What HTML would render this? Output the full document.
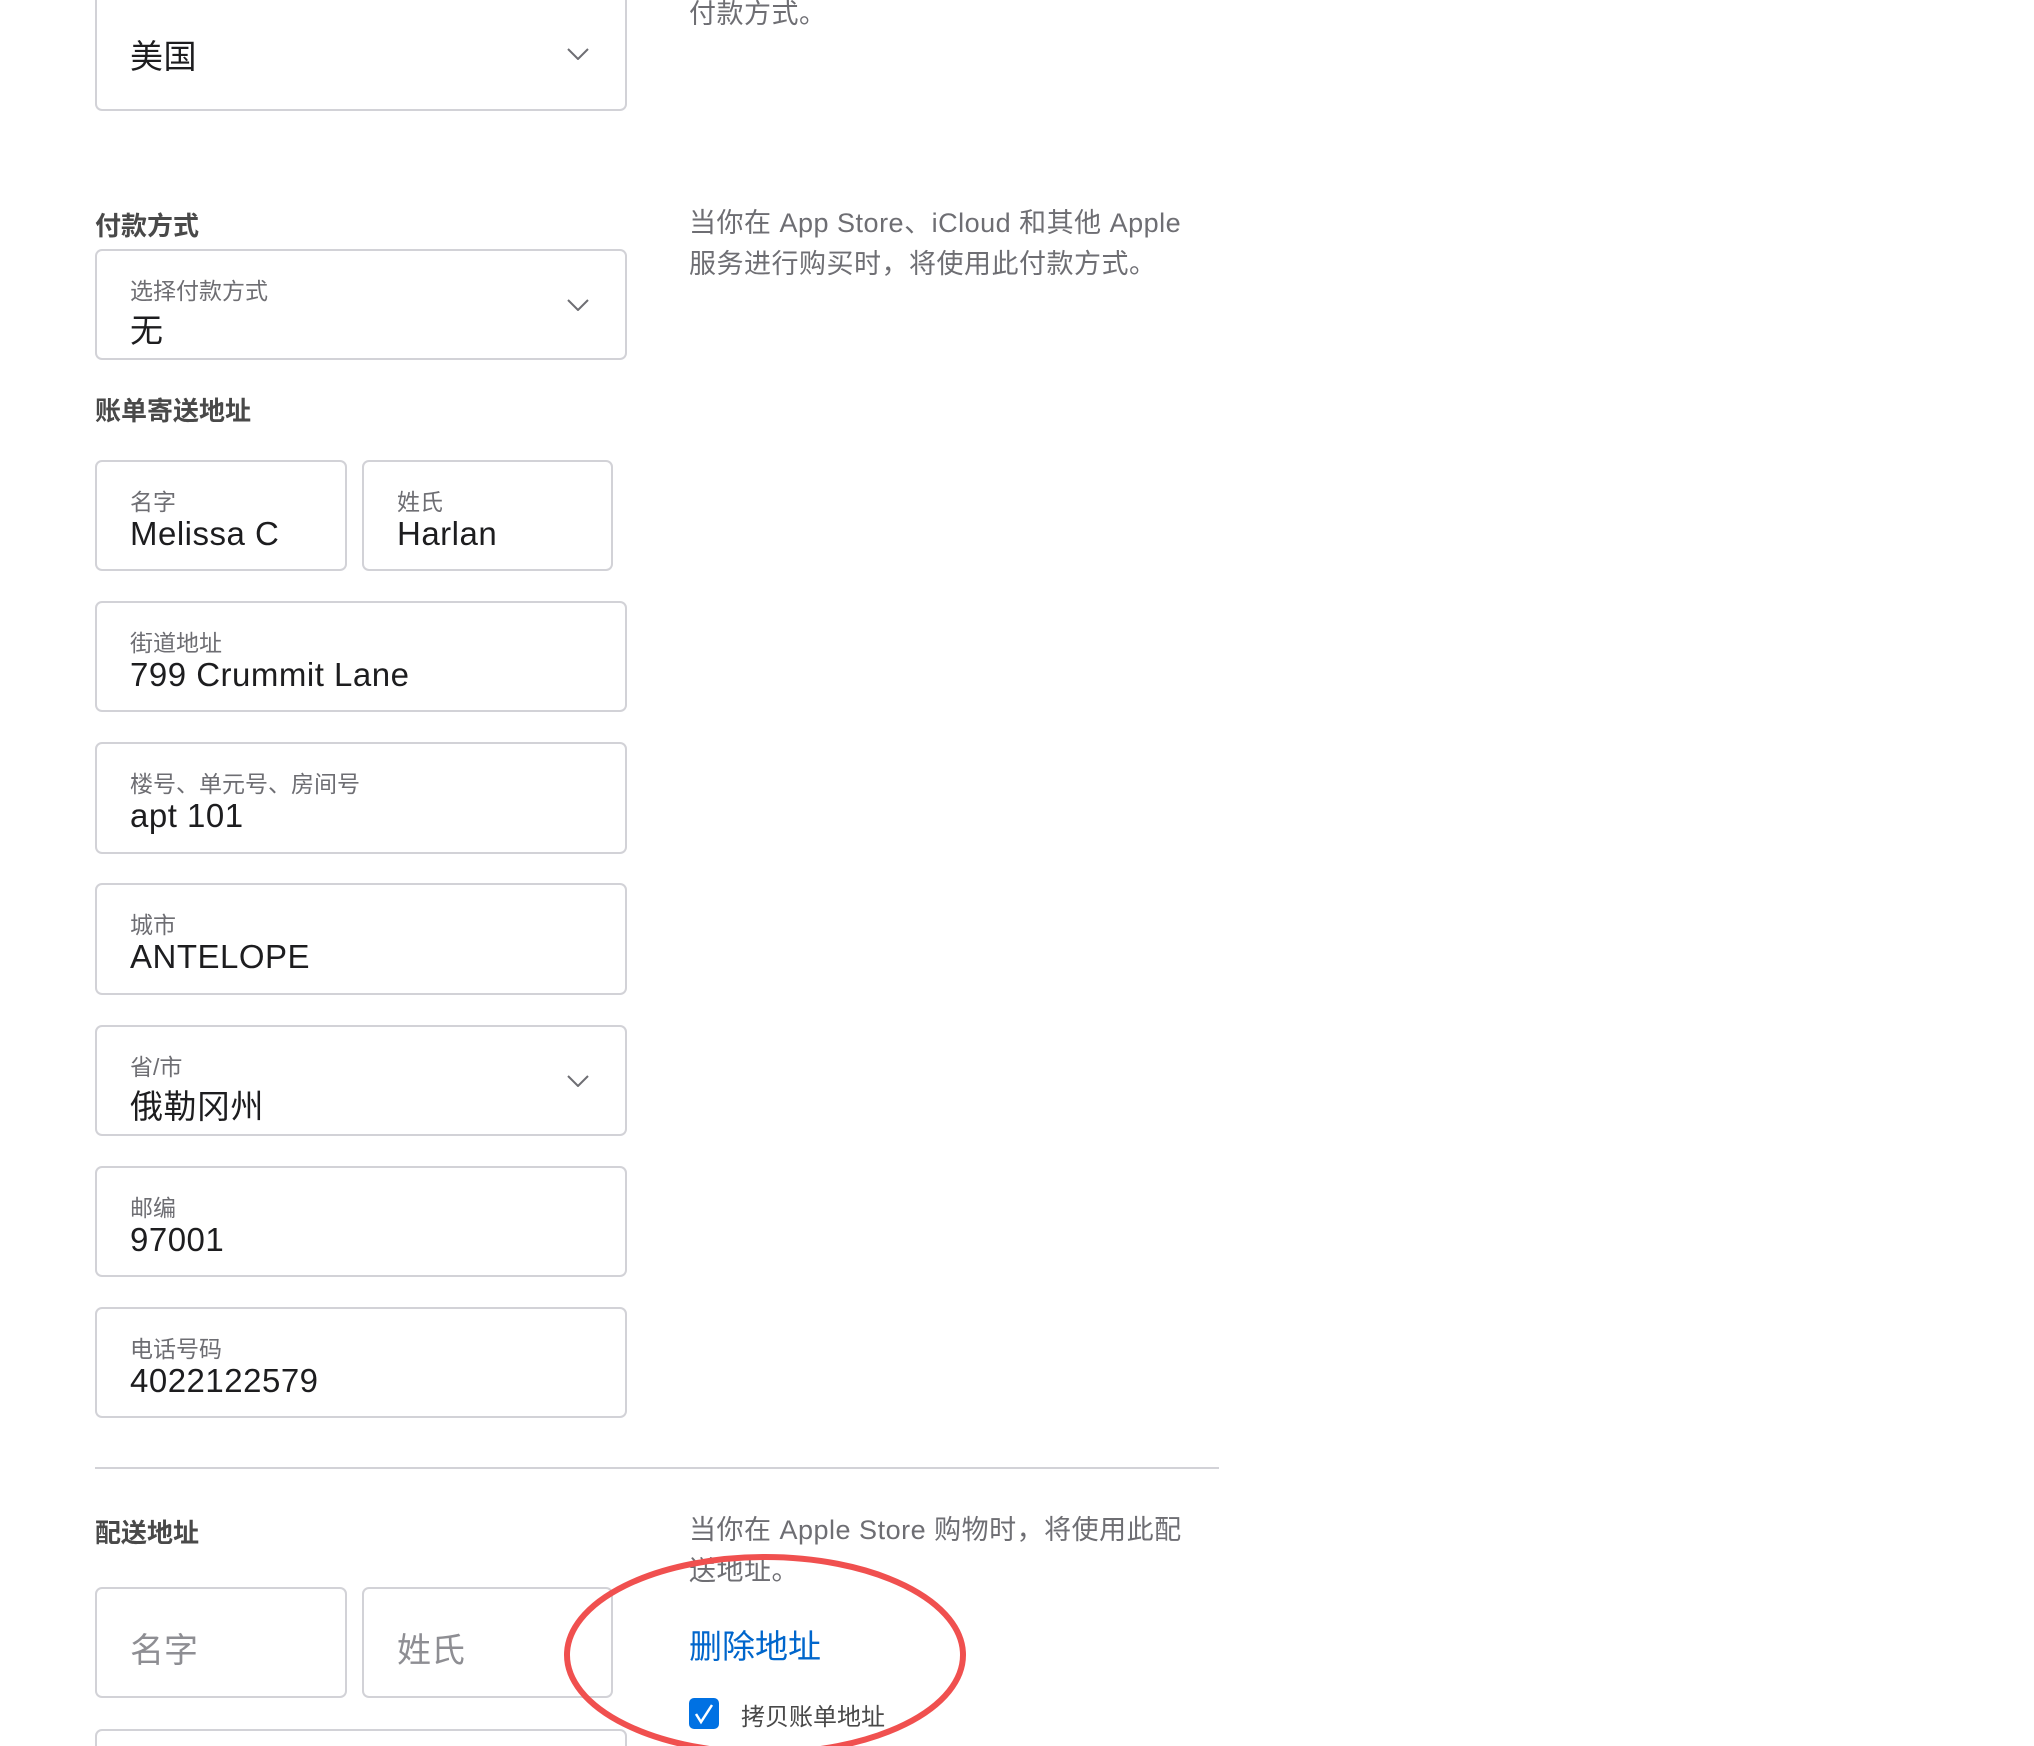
<!DOCTYPE html>
<html><head><meta charset="utf-8"><style>
html,body{margin:0;padding:0;background:#fff;width:2034px;height:1746px;overflow:hidden;position:relative;font-family:"Liberation Sans","Noto Sans CJK SC",sans-serif;}
.a{position:absolute;}
.box{position:absolute;border:2px solid #d2d2d7;border-radius:7px;box-sizing:border-box;background:#fff;}
.lab{position:absolute;left:33px;top:21px;font-size:23px;color:#6e6e73;white-space:nowrap;}
.val{position:absolute;left:33px;top:53px;font-size:33px;color:#1d1d1f;white-space:nowrap;letter-spacing:0.5px;}
.ph{position:absolute;left:33px;top:34px;font-size:34px;color:#8e8e93;}
.h{position:absolute;left:95px;font-size:26px;font-weight:bold;color:#494949;white-space:nowrap;}
.t{position:absolute;left:689px;font-size:27px;color:#6e6e73;line-height:41px;white-space:nowrap;letter-spacing:0.5px;}
.chev{position:absolute;right:36px;width:22px;height:12px;}
</style></head><body>
<div class="t" style="top:-6px">付款方式。</div>
<div class="box" style="left:95px;top:-10px;width:532px;height:121px"><div class="val" style="top:38px">美国</div>
<svg class="chev" style="top:56px" viewBox="0 0 22 12"><path d="M1 1L11 11L21 1" fill="none" stroke="#6e6e73" stroke-width="2"/></svg></div>

<div class="h" style="top:206px">付款方式</div>
<div class="t" style="top:203px">当你在 App Store、iCloud 和其他 Apple<br>服务进行购买时，将使用此付款方式。</div>
<div class="box" style="left:95px;top:249px;width:532px;height:111px"><div class="lab">选择付款方式</div><div class="val">无</div>
<svg class="chev" style="top:48px" viewBox="0 0 22 12"><path d="M1 1L11 11L21 1" fill="none" stroke="#6e6e73" stroke-width="2"/></svg></div>

<div class="h" style="top:391px">账单寄送地址</div>
<div class="box" style="left:95px;top:460px;width:252px;height:111px"><div class="lab">名字</div><div class="val">Melissa C</div></div>
<div class="box" style="left:362px;top:460px;width:251px;height:111px"><div class="lab">姓氏</div><div class="val">Harlan</div></div>
<div class="box" style="left:95px;top:601px;width:532px;height:111px"><div class="lab">街道地址</div><div class="val">799 Crummit Lane</div></div>
<div class="box" style="left:95px;top:742px;width:532px;height:112px"><div class="lab">楼号、单元号、房间号</div><div class="val">apt 101</div></div>
<div class="box" style="left:95px;top:883px;width:532px;height:112px"><div class="lab">城市</div><div class="val">ANTELOPE</div></div>
<div class="box" style="left:95px;top:1025px;width:532px;height:111px"><div class="lab">省/市</div><div class="val">俄勒冈州</div>
<svg class="chev" style="top:48px" viewBox="0 0 22 12"><path d="M1 1L11 11L21 1" fill="none" stroke="#6e6e73" stroke-width="2"/></svg></div>
<div class="box" style="left:95px;top:1166px;width:532px;height:111px"><div class="lab">邮编</div><div class="val">97001</div></div>
<div class="box" style="left:95px;top:1307px;width:532px;height:111px"><div class="lab">电话号码</div><div class="val">4022122579</div></div>

<div class="a" style="left:95px;top:1467px;width:1124px;height:2px;background:#d2d2d7"></div>

<div class="h" style="top:1513px">配送地址</div>
<div class="t" style="top:1510px">当你在 Apple Store 购物时，将使用此配<br>送地址。</div>
<div class="box" style="left:95px;top:1587px;width:252px;height:111px"><div class="ph">名字</div></div>
<div class="box" style="left:362px;top:1587px;width:251px;height:111px"><div class="ph">姓氏</div></div>
<div class="box" style="left:95px;top:1729px;width:532px;height:60px"></div>

<div class="a" style="left:689px;top:1620px;font-size:33px;color:#0066cc">删除地址</div>
<div class="a" style="left:689px;top:1698px;width:30px;height:31px;background:#0071e3;border-radius:5px">
<svg width="30" height="31" viewBox="0 0 30 31"><path d="M7 16L12 24L23 7" fill="none" stroke="#fff" stroke-width="2.5"/></svg></div>
<div class="a" style="left:741px;top:1697px;font-size:24px;color:#494949">拷贝账单地址</div>

<svg class="a" style="left:560px;top:1550px" width="415" height="215" viewBox="0 0 415 215"><ellipse cx="205" cy="105" rx="198" ry="98" fill="none" stroke="#f0504f" stroke-width="6"/></svg>
</body></html>
